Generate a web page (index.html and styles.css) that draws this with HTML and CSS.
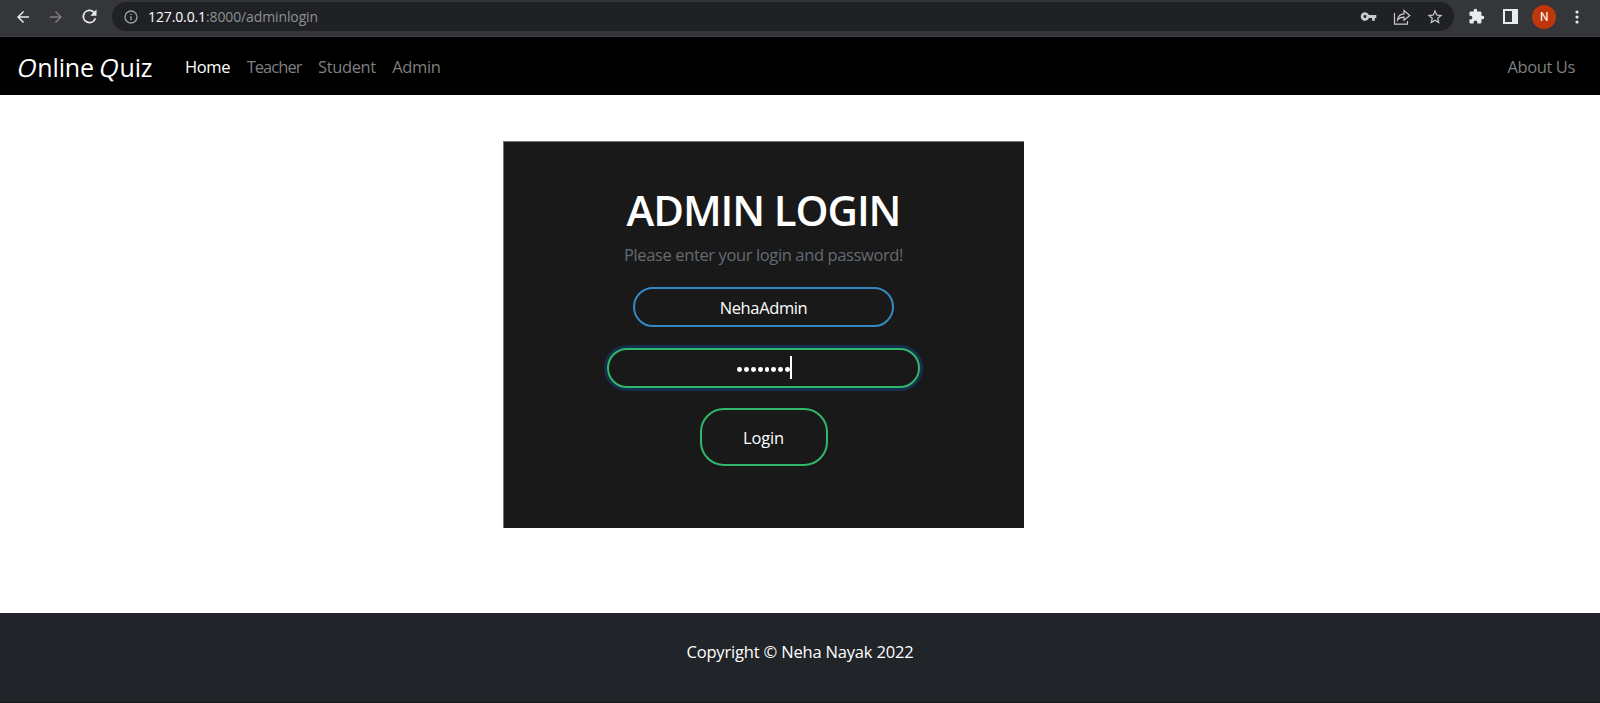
FILE: index.html
```html
<!DOCTYPE html>
<html lang="en">
<head>
<meta charset="utf-8">
<title>Online Quiz</title>
<link rel="stylesheet" href="styles.css">
</head>
<body>
<div class="toolbar">
  <svg class="icon back" viewBox="0 0 24 24"><path d="M20 11H7.8l5.600-5.600L12 4l-8 8 8 8 1.400-1.400L7.800 13H20z"/></svg>
  <svg class="icon forward" viewBox="0 0 24 24"><path d="M4 13h12.200l-5.600 5.600L12 20l8-8-8-8-1.400 1.400 5.600 5.600H4z"/></svg>
  <svg class="icon reload" viewBox="0 0 24 24"><path d="M17.650 6.350A8 8 0 1 0 19.730 14h-2.080A6 6 0 1 1 12 6c1.660 0 3.140.690 4.220 1.780L13 11h7V4z"/></svg>
  <div class="omnibox">
    <svg class="icon info" viewBox="0 0 24 24"><path d="M11 17h2v-6h-2zm0-8h2V7h-2zm1-7a10 10 0 1 0 0 20 10 10 0 0 0 0-20zm0 18a8 8 0 1 1 0-16 8 8 0 0 1 0 16z"/></svg>
    <span class="url"><b>127.0.0.1</b>:8000/adminlogin</span>
    <svg class="icon key" viewBox="0 0 24 24"><path d="M12.650 10A6 6 0 1 0 12.650 14H17v4h4v-4h2v-4zM7 14a2 2 0 1 1 0-4 2 2 0 0 1 0 4z"/></svg>
    <svg class="icon share" viewBox="0 0 18 18"><path d="M1.500 5V16.200H14.500V13M4.500 12C5 8 7.500 6 11 5.800V2.500L16.800 7.500 11 12.200V9.200C8 9.200 6 10 4.500 12z"/></svg>
    <svg class="icon star" viewBox="0 0 24 24"><path d="M22 9.240l-7.190-.620L12 2 9.190 8.630 2 9.240l5.460 4.730L5.820 21 12 17.270 18.180 21l-1.630-7.030zM12 15.400l-3.760 2.270 1-4.280-3.320-2.880 4.380-.380L12 6.100l1.710 4.040 4.380.380-3.320 2.880 1 4.280z"/></svg>
  </div>
  <svg class="icon puzzle" viewBox="0 0 24 24"><path d="M20.500 11H19V7a2 2 0 0 0-2-2h-4V3.500a2.500 2.500 0 0 0-5 0V5H4a2 2 0 0 0-2 2v3.800h1.500a2.700 2.700 0 0 1 0 5.400H2V20c0 1.100.9 2 2 2h3.800v-1.500a2.700 2.700 0 0 1 5.400 0V22H17a2 2 0 0 0 2-2v-4h1.500a2.500 2.500 0 0 0 0-5z"/></svg>
  <svg class="icon panel" viewBox="0 0 15 15"><path fill-rule="evenodd" d="M0 0h15v15H0zM2 2v11h7V2z"/></svg>
  <span class="avatar">N</span>
  <svg class="icon dots" viewBox="0 0 4 14"><circle cx="2" cy="2" r="1.600"/><circle cx="2" cy="7" r="1.600"/><circle cx="2" cy="12" r="1.600"/></svg>
</div>
<nav class="navbar">
  <a class="brand"><span class="slant">O</span>nline <span class="slant">Q</span>uiz</a>
  <a class="link active">Home</a>
  <a class="link teacher">Teacher</a>
  <a class="link">Student</a>
  <a class="link">Admin</a>
  <a class="link about">About Us</a>
</nav>
<main class="content">
  <form class="card">
    <h1 class="title">ADMIN LOGIN</h1>
    <p class="subtitle">Please enter your login and password!</p>
    <div class="field username">NehaAdmin</div>
    <div class="field password"><i></i><i></i><i></i><i></i><i></i><i></i><i></i><i></i><span class="caret"></span></div>
    <div class="submit">Login</div>
  </form>
</main>
<footer class="footer"><span class="copyright">Copyright © Neha Nayak 2022</span></footer>
</body>
</html>
```
FILE: styles.css
```css
* { box-sizing: border-box; }
body { margin: 0; height: 703px; overflow: hidden; display: flex; flex-direction: column; background: #fff; font-family: "Open Sans", "Noto Sans", sans-serif; font-size: 16.5px; line-height: 24px; letter-spacing: -0.38px; color: #fff; }
.toolbar { height: 37px; flex: none; display: flex; align-items: center; padding: 0 16px 3px 14px; background: #35363a; border-bottom: 1px solid #3f4043; }
.icon { flex: none; width: 18px; height: 18px; fill: #e8eaed; }
.forward { margin-left: 15px; fill: #7d7e81; }
.reload { width: 21px; height: 21px; margin-left: 14px; }
.omnibox { width: 1342px; height: 29px; margin-left: 12px; border-radius: 15px; background: #202124; display: flex; align-items: center; padding: 0 10px 0 11px; }
.info { width: 16px; height: 16px; fill: #9aa0a6; }
.url { margin-left: 9px; font-size: 14px; letter-spacing: -0.12px; color: #8d9196; }
.url b { font-weight: 400; color: #fff; }
.key { width: 17px; height: 17px; margin-left: auto; fill: #c8cacd; }
.share { width: 18px; height: 18px; margin-left: 16px; fill: none; stroke: #c8cacd; stroke-width: 1.2; }
.star { margin-left: 15px; fill: #c8cacd; }
.puzzle { width: 17px; height: 17px; margin-left: 14px; }
.panel { width: 15px; height: 15px; margin-left: 18px; }
.avatar { width: 24px; height: 24px; margin-left: 14px; border-radius: 50%; background: #bf360c; font: 12px/24px Roboto, sans-serif; text-align: center; }
.dots { width: 4px; height: 14px; margin-left: 19px; }
.navbar { height: 58px; flex: none; display: flex; align-items: center; padding: 1px 25px 0 18px; background: #000; }
.brand { width: 167px; font-size: 25px; font-weight: 500; letter-spacing: -0.15px; white-space: nowrap; }
.slant { display: inline-block; transform: skewX(-12deg); }
.link { margin-right: 16.5px; color: #7f7f7f; }
.teacher { letter-spacing: -0.95px; }
.active { color: #fff; }
.about { margin: 0 0 0 auto; }
.content { flex: 1; padding: 46px 0 0 503px; }
.card { width: 521px; height: 387px; border: solid #777; border-width: 1px 0 0 1px; background: #191919; padding: 43px 1px 0 0; display: flex; flex-direction: column; align-items: center; }
.title { margin: 0; font-size: 42px; line-height: 49px; font-weight: 600; letter-spacing: -1.1px; white-space: nowrap; }
.subtitle { margin: 9px 0 0; color: #646b71; white-space: nowrap; }
.field { height: 40px; border: 2px solid #3489c3; border-radius: 24px; display: flex; align-items: center; justify-content: center; }
.username { width: 261px; margin-top: 20px; padding-top: 2px; }
.password { width: 313px; margin-top: 21px; border-color: #30b76a; box-shadow: 0 0 0 3px #14304d; }
.password i { width: 4.800px; height: 4.800px; margin: 3px 1px 0; border-radius: 50%; background: #fff; }
.caret { width: 2px; height: 23px; background: #fff; margin: -1px -1px 0 -1px; }
.submit { width: 128px; height: 58px; margin-top: 20px; border: 2px solid #30b76a; border-radius: 24px; line-height: 56px; letter-spacing: -0.2px; text-align: center; }
.footer { height: 90px; flex: none; background: #212529; border-bottom: 1px solid #16191c; padding-top: 27px; letter-spacing: -0.18px; text-align: center; }
```
